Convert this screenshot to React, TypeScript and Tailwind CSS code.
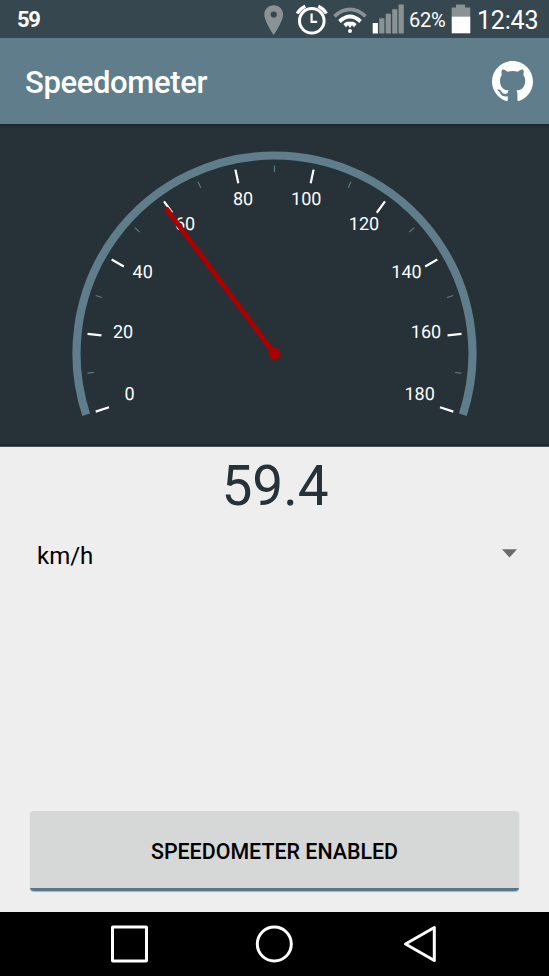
const CX = 274.5;
const CY = 229.5;

const labels = [
  { text: "0", x: 129.5, y: 276.4 },
  { text: "20", x: 123, y: 213.6 },
  { text: "40", x: 142.7, y: 153.6 },
  { text: "60", x: 185, y: 106.2 },
  { text: "80", x: 243, y: 80.7 },
  { text: "100", x: 306.2, y: 80.7 },
  { text: "120", x: 364, y: 106.2 },
  { text: "140", x: 406.5, y: 153.6 },
  { text: "160", x: 426, y: 213.6 },
  { text: "180", x: 419.6, y: 276.4 },
];

function polar(deg: number, r: number) {
  const a = (deg * Math.PI) / 180;
  return { x: CX - r * Math.cos(a), y: CY - r * Math.sin(a) };
}

function Tick({ deg, major }: { deg: number; major: boolean }) {
  const from = polar(deg, 188);
  const to = polar(deg, major ? 174 : 181.5);
  return (
    <line
      x1={from.x}
      y1={from.y}
      x2={to.x}
      y2={to.y}
      stroke={major ? "#ffffff" : "#607d8b"}
      strokeWidth={major ? 2.2 : 1.1}
    />
  );
}

function Gauge() {
  const start = polar(-18, 198);
  const end = polar(198, 198);
  return (
    <svg width="549" height="322" viewBox="0 0 549 322" className="block">
      <path
        d={`M${start.x} ${start.y}A198 198 0 1 1 ${end.x} ${end.y}`}
        fill="none"
        stroke="#607d8b"
        strokeWidth="8.2"
      />
      {Array.from({ length: 19 }, (_, i) => (
        <Tick key={i} deg={-18 + i * 12} major={i % 2 === 0} />
      ))}
      {labels.map((l) => (
        <text
          key={l.text}
          x={l.x}
          y={l.y}
          textAnchor="middle"
          fill="#fff"
          textRendering="geometricPrecision"
          className="text-[18px]"
        >
          {l.text}
        </text>
      ))}
      <line x1="166.8" y1="85.3" x2={CX} y2={CY} stroke="#aa0000" strokeWidth="4.9" strokeLinecap="round" />
      <circle cx={CX} cy={CY} r="6.1" fill="#aa0000" />
    </svg>
  );
}

function StatusIcons() {
  return (
    <svg width="142" height="38" viewBox="263 0 142 38" className="block">
      <path
        fillRule="evenodd"
        fill="#8a9296"
        d="M273.7 5.2c-5.3 0-9.4 4-9.4 9.3 0 6.8 9.4 20.6 9.4 20.6s9.4-13.8 9.4-20.6c0-5.300-4.100-9.300-9.400-9.300zm0 6.200a3.100 3.100 0 1 1 0 6.200a3.100 3.100 0 0 1 0-6.200z"
      />
      <g fill="none" stroke="#fff">
        <circle cx="311.8" cy="20.800" r="12.300" strokeWidth="3" />
        <path d="M311.600 13.500v8.400h5.600" strokeWidth="2.200" />
        <path d="M297.200 13.500Q300 8.600 305.300 6.300M318.300 6.300Q323.600 8.600 326.400 13.500" strokeWidth="3.200" />
      </g>
      <path d="M334.500 16.300Q350 2.500 365.500 16.300" fill="none" stroke="#8a9296" strokeWidth="3.600" />
      <path d="M339.500 21.500Q350 11.700 360.500 21.500" fill="none" stroke="#fff" strokeWidth="3.800" />
      <path d="M343.300 24l3.200-2.200h7l3.200 2.200-2.700 3.200-2-2-2 2.800-2-2.800-2 2z" fill="#fff" />
      <circle cx="350" cy="31" r="2" fill="#fff" />
      <path d="M372.700 23h5.200v10.500h-5.200z" fill="#fff" />
      <path
        d="M379.200 18.200h5.200v15.300h-5.200zM385.700 13.700h5.200v19.800h-5.200zM392.200 9.200h5.200v24.300h-5.200zM398.600 4.500h5.200v29h-5.200z"
        fill="#8a9296"
      />
    </svg>
  );
}

function StatusBar() {
  return (
    <div className="flex h-[38px] items-center bg-[#37474f] text-white">
      <span className="ml-[17px] w-[246px] pt-px text-[22px] leading-[38px] font-bold tracking-[-1.3px]">59</span>
      <StatusIcons />
      <span className="ml-1 w-[42px] pt-[2px] text-[20px] leading-[38px] tracking-[-0.3px] whitespace-nowrap">62%</span>
      <svg width="20" height="38" viewBox="451 0 20 38" className="block">
        <path d="M456 4.500h9v3h5.200v9h-18.500v-9h4.300z" fill="#8a9296" />
        <path d="M451.700 16.500h18.600v16.800h-18.600z" fill="#fff" />
      </svg>
      <span className="ml-[6px] pt-[4px] text-[25px] leading-[38px] tracking-[-0.2px] whitespace-nowrap">12:43</span>
    </div>
  );
}

export default function App() {
  return (
    <div className="flex h-[976px] w-[549px] flex-col overflow-hidden bg-[#eeeeee] font-[Roboto,sans-serif]">
      <StatusBar />
      <header className="flex h-[86px] items-center justify-between bg-[#607d8b] pr-4 pl-[25px]">
        <h1 className="pt-[5px] text-[31px] font-medium tracking-[-0.35px] text-white">Speedometer</h1>
        <svg width="41" height="40" viewBox="0 0 16 15.620" preserveAspectRatio="none" className="mb-px block" fill="#fff">
          <path d="M8 0C3.580 0 0 3.580 0 8c0 3.540 2.290 6.530 5.470 7.590.4.070.7-.17.700-.38V13.750c-2.010.37-2.680-.49-2.840-.94-.09-.23-.48-.94-.82-1.130-.28-.15-.68-.52-.01-.53.63-.01 1.080.58 1.230.82.72 1.210 1.870.87 2.330.66.07-.52.28-.87.51-1.070-1.780-.2-3.440-.89-3.440-3.950 0-.87.21-1.590.72-2.150-.08-.2-.36-1.020.08-2.120 0 0 .67-.21 2.100.82.64-.18 1.320-.27 2-.27s1.360.09 2 .27c1.430-1.040 2.100-.82 2.100-.82.44 1.100.16 1.920.08 2.120.51.56.72 1.270.72 2.150 0 3.070-1.670 3.750-3.450 3.950.29.25.44.73.44 1.480v2.200c0 .21.150.46.550.38A8.010 8.010 0 0 0 16 8c0-4.420-3.580-8-8-8z" />
        </svg>
      </header>
      <section className="h-[323px] border-b border-[#46535a] bg-[#263238] bg-[linear-gradient(to_bottom,#1b252b_0px,#212c33_2px,#263238_5px,#263238_320px,#1a262c_321px)]">
        <Gauge />
      </section>
      <main className="flex flex-1 flex-col">
        <div className="mt-[7px] pl-px text-center text-[55px] leading-[64px] text-[#263238]">59.4</div>
        <div className="mt-[17px] flex h-[40px] items-center justify-between pr-8 pl-[37px] text-[24px] text-black">
          <span className="pt-px">km/h</span>
          <svg width="15" height="9" viewBox="0 0 15 9" className="mb-[3px] block">
            <path d="M0 0.300h15L7.500 8.500z" fill="#6b6b6b" />
          </svg>
        </div>
        <button className="mx-[30px] mt-auto mb-[21px] flex h-[80px] flex-col overflow-hidden rounded-[4px] bg-[#d6d8d7] text-[21.4px] font-medium text-black shadow-[0_1px_1px_rgba(0,0,0,0.25)]">
          <span className="flex w-full flex-1 items-center justify-center pt-[5px]">SPEEDOMETER ENABLED</span>
          <span className="h-[3px] w-full bg-[#56778a]" />
        </button>
      </main>
      <nav className="flex h-16 items-center justify-between bg-black pr-[111px] pl-[110px]">
        <svg width="38" height="38" viewBox="0 0 38 38" fill="none" stroke="#fff" strokeWidth="3">
          <rect x="2.500" y="2" width="34" height="34" rx="0.500" />
        </svg>
        <svg width="38" height="38" viewBox="0 0 38 38" fill="none" stroke="#fff" strokeWidth="3">
          <circle cx="19.300" cy="19" r="17" />
        </svg>
        <svg width="38" height="38" viewBox="0 0 38 38" fill="none" stroke="#fff" strokeWidth="3" strokeLinejoin="round">
          <path d="M34.300 2.500v33L5.500 19z" />
        </svg>
      </nav>
    </div>
  );
}
